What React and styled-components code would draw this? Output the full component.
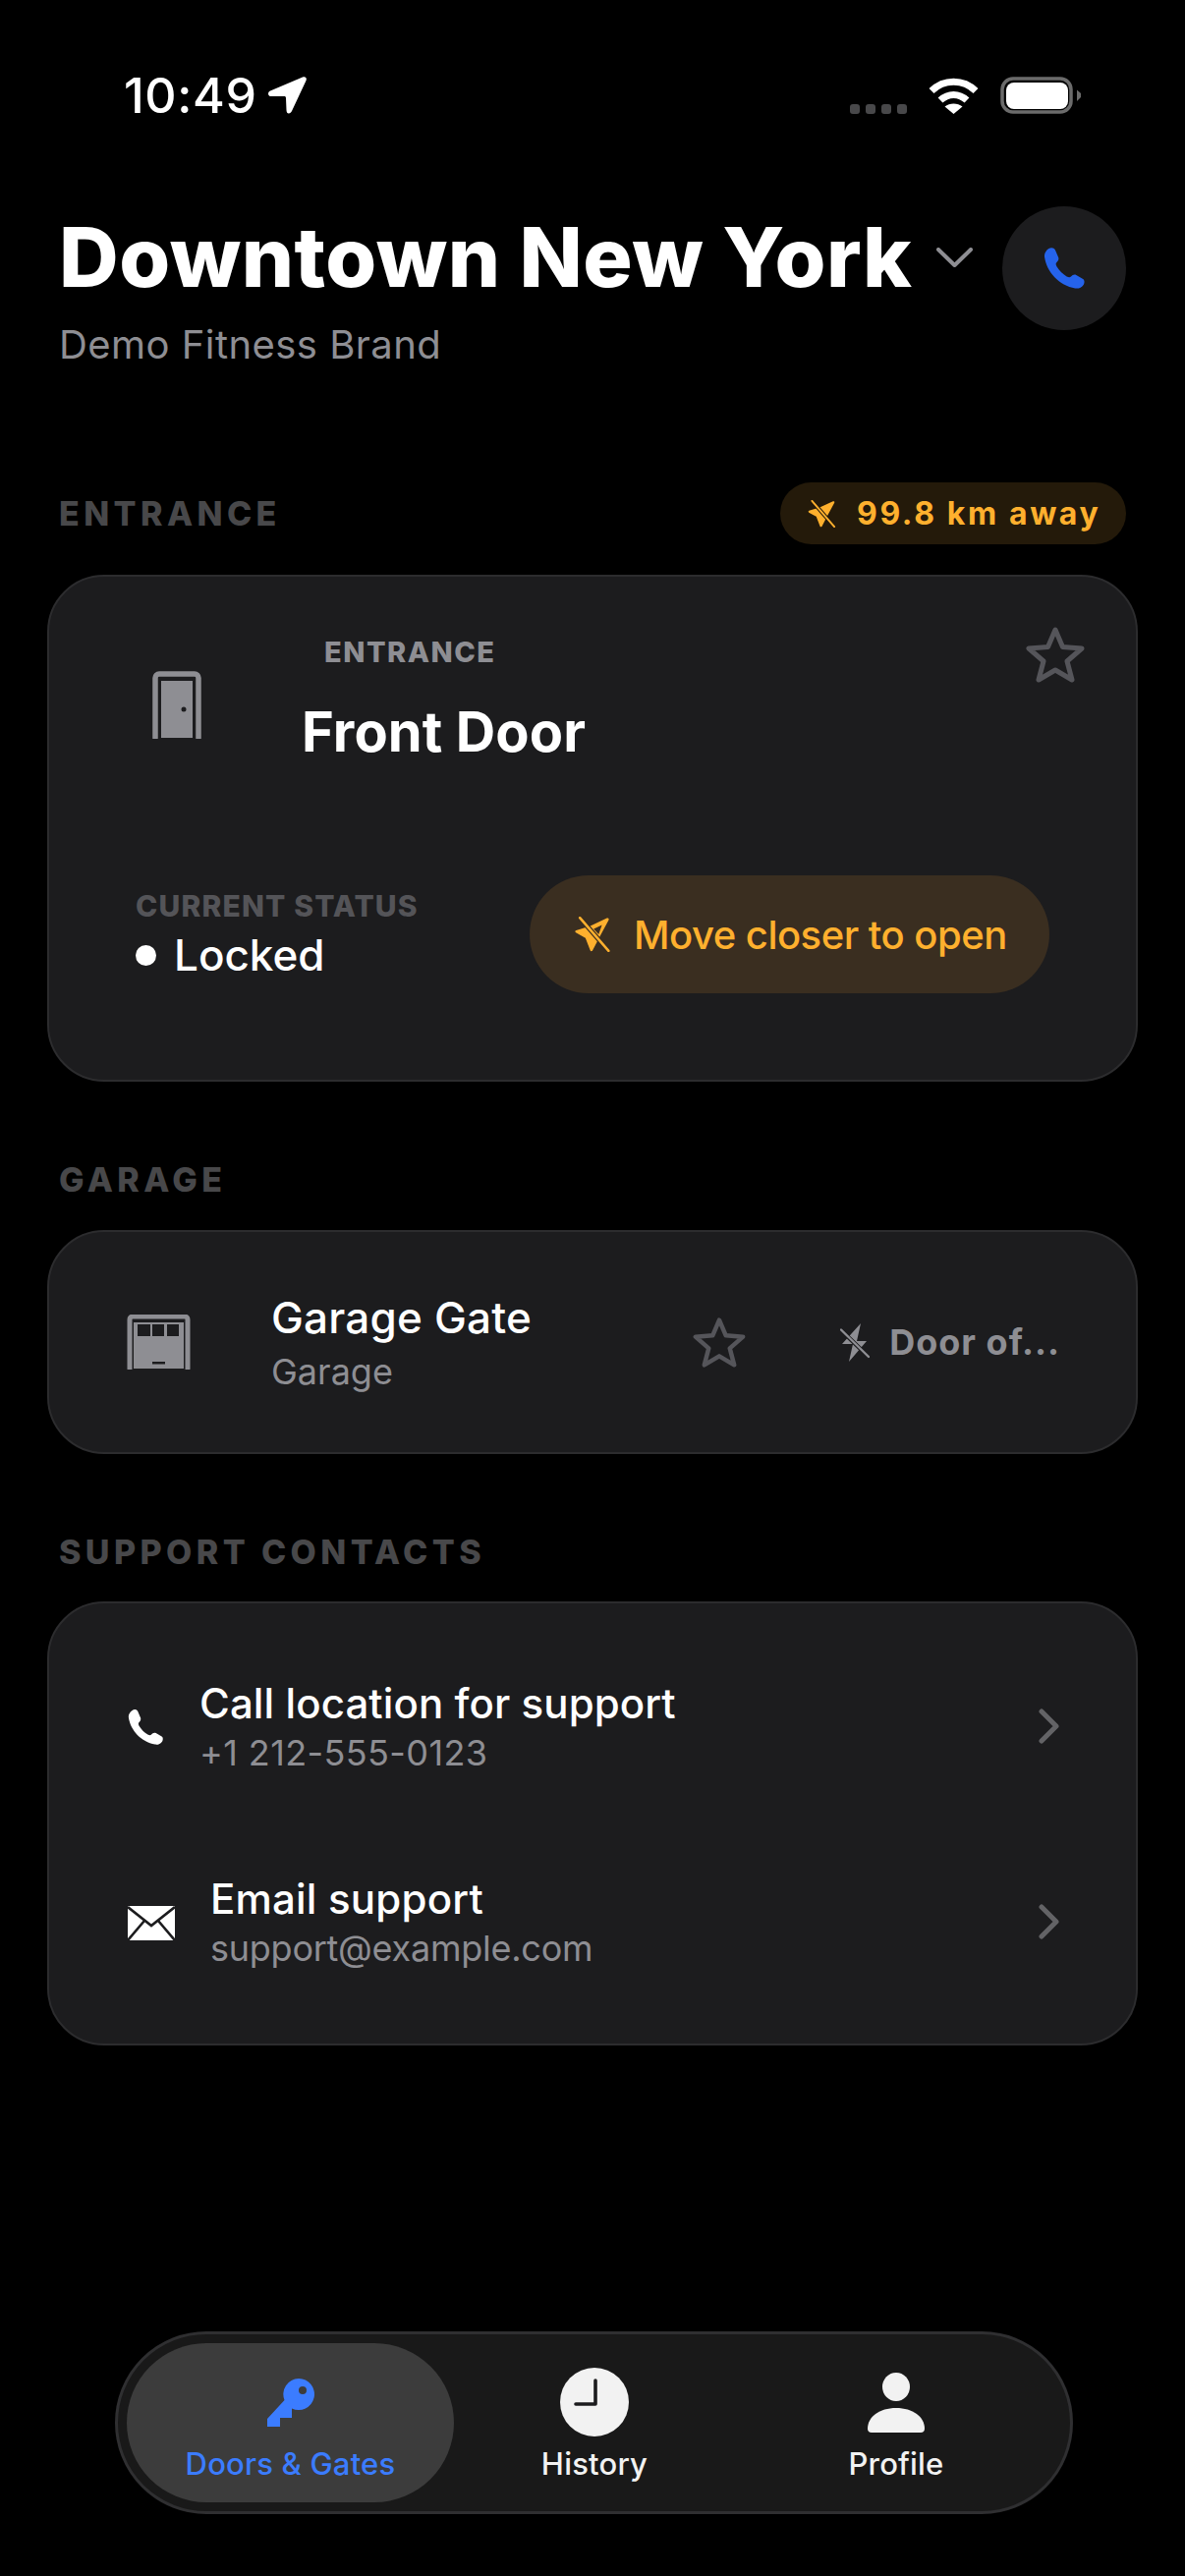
import React from "react";
import styled, { createGlobalStyle } from "styled-components";

const Global = createGlobalStyle`
  html, body { margin: 0; padding: 0; background: #000; }
  * { box-sizing: border-box; }
  body { font-family: Inter, "Noto Sans", sans-serif; }
`;

const Page = styled.div`
  width: 1206px;
  height: 2622px;
  background: #000;
  padding: 78px 48px 0;
  color: #fff;
  overflow: hidden;
`;

const StatusBar = styled.div`
  height: 38px;
  margin: 0 58px 0 78px;
  display: flex;
  align-items: center;
  justify-content: space-between;
`;
const Clock = styled.div`
  display: flex;
  align-items: center;
  gap: 11px;
  font-size: 50px;
  line-height: 38px;
  font-weight: 500;
  letter-spacing: 0.6px;
`;
const Indicators = styled.div`
  display: flex;
  align-items: center;
  gap: 22px;
`;
const Dots = styled.div`
  display: flex;
  gap: 6px;
  align-self: flex-end;
`;
const Dot = styled.span`
  width: 10px;
  height: 10px;
  border-radius: 3px;
  background: #48484a;
`;

const Header = styled.header`
  margin-top: 94px;
  padding: 0 12px;
  display: flex;
  align-items: flex-start;
  justify-content: space-between;
`;
const HeaderText = styled.div`
  padding-top: 10px;
`;
const TitleRow = styled.div`
  display: flex;
  align-items: center;
  gap: 25px;
`;
const Title = styled.h1`
  margin: 0;
  font-size: 84px;
  line-height: 84px;
  font-weight: 800;
  letter-spacing: 0.5px;
  white-space: nowrap;
`;
const Subtitle = styled.div`
  margin-top: 23px;
  font-size: 40px;
  line-height: 48px;
  letter-spacing: 0.45px;
  color: #8e8e93;
`;
const CallButton = styled.div`
  width: 126px;
  height: 126px;
  border-radius: 50%;
  background: #1c1c1e;
  display: flex;
  align-items: center;
  justify-content: center;
  flex: none;
`;

const SectionHead = styled.div`
  margin-top: ${(p) => p.$top}px;
  min-height: ${(p) => p.$height || 40}px;
  padding: 0 12px;
  display: flex;
  align-items: center;
  justify-content: space-between;
`;
const SectionLabel = styled.div`
  font-size: 34px;
  line-height: 40px;
  font-weight: 800;
  letter-spacing: 4.4px;
  color: #48484a;
`;
const DistanceBadge = styled.div`
  height: 63px;
  width: 352px;
  padding-left: 27px;
  border-radius: 32px;
  background: #241a0a;
  color: #ffb02e;
  display: flex;
  align-items: center;
  gap: 21px;
  font-size: 32px;
  font-weight: 700;
  letter-spacing: 2.6px;
  white-space: nowrap;
`;

const Card = styled.section`
  margin-top: ${(p) => p.$top || 31}px;
  background: #1c1c1e;
  border: 2px solid #2c2c2e;
  border-radius: 58px;
`;
const DoorCard = styled(Card)`
  height: 516px;
  padding: 48px 52px 0 88px;
`;
const DoorTop = styled.div`
  height: 256px;
  display: flex;
  align-items: flex-start;
`;
const DoorIconSlot = styled.div`
  margin: 48px 0 0 17px;
  flex: none;
  display: flex;
`;
const NameColumn = styled.div`
  margin-left: 102px;
  padding-top: 11px;
`;
const Kicker = styled.div`
  margin-left: 23px;
  font-size: 29px;
  line-height: 35px;
  font-weight: 800;
  letter-spacing: 1.5px;
  color: #8e8e93;
`;
const DoorName = styled.div`
  margin-top: 30px;
  font-size: 56px;
  line-height: 68px;
  font-weight: 700;
  letter-spacing: 0.1px;
`;
const StarSlot = styled.div`
  margin-left: auto;
  margin-top: 3px;
  display: flex;
`;
const DoorBottom = styled.div`
  height: 120px;
  padding-right: 36px;
  display: flex;
  align-items: center;
  justify-content: space-between;
`;
const StatusLabel = styled.div`
  font-size: 30px;
  line-height: 36px;
  font-weight: 800;
  letter-spacing: 1.15px;
  color: #545458;
`;
const StatusValue = styled.div`
  margin-top: 6px;
  display: flex;
  align-items: center;
  gap: 18px;
  font-size: 44px;
  line-height: 52px;
  font-weight: 500;
`;
const StatusDot = styled.span`
  width: 21px;
  height: 21px;
  border-radius: 50%;
  background: #fff;
`;
const MoveButton = styled.div`
  width: 529px;
  height: 120px;
  border-radius: 60px;
  padding-left: 45px;
  background: #3a2e20;
  color: #ffb02e;
  display: flex;
  align-items: center;
  gap: 24px;
  font-size: 40px;
  font-weight: 500;
  letter-spacing: -0.5px;
  white-space: nowrap;
`;

const GarageCard = styled(Card)`
  height: 228px;
  padding: 0 77px 0 79px;
  display: flex;
  align-items: center;
`;
const RowText = styled.div`
  margin-left: ${(p) => p.$gap}px;
  margin-bottom: ${(p) => p.$lift || 0}px;
`;
const RowTitle = styled.div`
  font-size: ${(p) => p.$size || 42}px;
  line-height: ${(p) => (p.$size ? 52 : 50)}px;
  font-weight: 500;
  letter-spacing: ${(p) => p.$ls || 0.1}px;
`;
const RowSub = styled.div`
  margin-top: ${(p) => p.$gap || 4}px;
  font-size: 36px;
  line-height: 42px;
  letter-spacing: ${(p) => p.$ls || 0}px;
  color: #8e8e93;
`;
const GarageStar = styled.div`
  margin-left: auto;
  display: flex;
`;
const OfflineTag = styled.div`
  margin-left: 96px;
  display: flex;
  align-items: center;
  gap: 20px;
  font-size: 36px;
  font-weight: 700;
  letter-spacing: 1px;
  color: #8e8e93;
  white-space: nowrap;
`;

const ContactCard = styled(Card)`
  height: 452px;
  padding: 27px 0 23px;
`;
const ContactRow = styled.div`
  height: 199px;
  padding: 0 78px 0 80px;
  display: flex;
  align-items: center;
`;
const RowChevron = styled.div`
  margin-left: auto;
  margin-bottom: 3px;
  display: flex;
`;

const TabBar = styled.nav`
  margin: 291px 66px 0 69px;
  height: 186px;
  padding: 9px;
  border: 3px solid #2f2f31;
  border-radius: 93px;
  background: #191919;
  display: grid;
  grid-template-columns: 333px 286px 328px;
`;
const Tab = styled.div`
  height: 162px;
  padding-top: 25px;
  border-radius: 81px;
  background: ${(p) => (p.$active ? "#3c3c3c" : "transparent")};
  color: ${(p) => (p.$active ? "#3b7cff" : "#f2f2f2")};
  display: flex;
  flex-direction: column;
  align-items: center;
`;
const TabIcon = styled.div`
  height: 70px;
  display: flex;
  align-items: center;
`;
const TabLabel = styled.div`
  margin-top: 10px;
  font-size: 31px;
  line-height: 36px;
  font-weight: 500;
  letter-spacing: 0.2px;
`;

const PHONE =
  "M5 1C7-.5 10 0 11 2l3 7c.8 2 0 3.500-1.500 5-1 1-1 2 0 4 2.500 4 5.500 7 9.500 9.500 2 1 3 1 4 0 1.500-1.500 3-2.500 5-1.500l6 3.500c2 1 2 3.500 1 5.500-2 3-5 4-8 3.500C15 36 3 23 1 9 .5 6 2 3 5 1Z";

const Phone = ({ size, color }) => (
  <svg width={size} height={size} viewBox="0 0 40 40">
    <path d={PHONE} fill={color} />
  </svg>
);

const NavSlash = ({ w, h, bg, hollow }) => (
  <svg width={w} height={h} viewBox="0 0 32 32">
    <path
      d="M30 2.500 15 9.500 2 13.500 11 18.500 15.500 30 22 17.500Z"
      fill="#ffb02e"
      stroke="#ffb02e"
      strokeWidth="2.400"
      strokeLinejoin="round"
    />
    {hollow && <path d="M25 7.500 17.500 11 22 16Z" fill={bg} />}
    <path d="M5 1 31 31" stroke={bg} strokeWidth="4.400" />
    <path d="M5 1 31 31" stroke="#ffb02e" strokeWidth="2.200" strokeLinecap="round" />
  </svg>
);

const BoltSlash = () => (
  <svg width="30" height="39" viewBox="0 0 30 39">
    <path d="M21 0 2 21h11L9 39l18-21H17Z" fill="#8e8e93" />
    <path d="M0 6 30 35" stroke="#1c1c1e" strokeWidth="4.200" />
    <path d="M1 6.500 29 34" stroke="#8e8e93" strokeWidth="2.400" strokeLinecap="round" />
  </svg>
);

const Star = ({ w, h }) => (
  <svg width={w} height={h} viewBox="0 0 60 57">
    <path
      d="M30 3 37.500 20.500 57 22 42 35 47 54 30 44 13 54 18 35 3 22 22.500 20.500Z"
      fill="none"
      stroke="#55555a"
      strokeWidth="5"
      strokeLinejoin="round"
    />
  </svg>
);

const DoorIcon = () => (
  <svg width="50" height="69" viewBox="0 0 50 69">
    <path
      d="M3 68V7a4 4 0 0 1 4-4h36a4 4 0 0 1 4 4v61"
      fill="none"
      stroke="#8e8e93"
      strokeWidth="5.500"
      strokeLinecap="round"
    />
    <rect x="9" y="10" width="32" height="58" fill="#8e8e93" />
    <circle cx="32" cy="39" r="2.500" fill="#1c1c1e" />
  </svg>
);

const GarageIcon = () => (
  <svg width="65" height="56" viewBox="0 0 65 56">
    <path
      d="M3 55V5a3 3 0 0 1 3-3h53a3 3 0 0 1 3 3v50"
      fill="none"
      stroke="#8e8e93"
      strokeWidth="5"
      strokeLinecap="round"
    />
    <rect x="7" y="8" width="51" height="47" fill="#8e8e93" />
    <rect x="11" y="10" width="13" height="12" fill="#1c1c1e" />
    <rect x="26" y="10" width="12" height="12" fill="#1c1c1e" />
    <rect x="41" y="10" width="12" height="12" fill="#1c1c1e" />
    <rect x="26" y="48" width="13" height="2.500" fill="#1c1c1e" />
  </svg>
);

const Envelope = () => (
  <svg width="48" height="35" viewBox="0 0 48 35">
    <rect width="48" height="35" fill="#fff" />
    <path
      d="M0 1 24 20 48 1M0 35 17 15M48 35 31 15"
      fill="none"
      stroke="#1c1c1e"
      strokeWidth="2.600"
    />
  </svg>
);

const Chevron = () => (
  <svg width="21" height="36" viewBox="0 0 21 36">
    <path
      d="M3 3 18 18 3 33"
      fill="none"
      stroke="#636366"
      strokeWidth="5"
      strokeLinecap="round"
      strokeLinejoin="round"
    />
  </svg>
);

const Key = () => (
  <svg width="50" height="49" viewBox="0 0 50 49">
    <path
      fillRule="evenodd"
      d="M33 0A16 16 0 1 1 26 30.400V40H14V49H1V41L18.500 22A16 16 0 0 1 33 0ZM37 8a4 4 0 1 0 0 8 4 4 0 0 0 0-8Z"
      fill="#3b7cff"
    />
  </svg>
);

const ClockIcon = () => (
  <svg width="70" height="70" viewBox="0 0 70 70">
    <circle cx="35" cy="35" r="35" fill="#f2f2f2" />
    <path
      d="M36 13V37H16"
      fill="none"
      stroke="#1c1c1e"
      strokeWidth="3.600"
      strokeLinecap="round"
      strokeLinejoin="round"
    />
  </svg>
);

const Person = () => (
  <svg width="58" height="61" viewBox="0 0 58 61">
    <ellipse cx="29" cy="14.500" rx="14" ry="14.500" fill="#f2f2f2" />
    <path
      d="M0 57C0 45 12 36 29 36s29 9 29 21c0 2.500-1.500 4-4 4H4c-2.500 0-4-1.500-4-4Z"
      fill="#f2f2f2"
    />
  </svg>
);

const LocationArrow = () => (
  <svg width="39" height="38" viewBox="0 0 39 38">
    <path
      d="M35 .6C38-.5 39.500 1.500 38.500 4L24 35c-1.500 3.500-5.500 3.500-5.500-1L18 22c0-1.500-.5-2-2-2H3c-3.500 0-4-4-1-5.500Z"
      fill="#fff"
    />
  </svg>
);

const Wifi = () => (
  <svg width="51" height="37" viewBox="0 0 51 37">
    <path d="M3 13.500C15.500 1 35.500 1 48 13.500" fill="none" stroke="#fff" strokeWidth="7" />
    <path d="M12 23C20 15.500 31 15.500 39 23" fill="none" stroke="#fff" strokeWidth="7" />
    <path d="M16.500 29.500C21.500 25.500 29.500 25.500 34.500 29.500L25.500 37Z" fill="#fff" />
  </svg>
);

const Battery = () => (
  <svg width="82" height="38" viewBox="0 0 82 38">
    <rect x="2" y="2" width="70" height="34" rx="11" fill="none" stroke="#6b6b6b" strokeWidth="3.500" />
    <rect x="6" y="6" width="63" height="27" rx="8" fill="#fff" />
    <path d="M78 13.500 82 17v4l-4 4Z" fill="#6b6b6b" />
  </svg>
);

const TitleChevron = () => (
  <svg width="37" height="20" viewBox="0 0 37 20">
    <path
      d="M2 2 18.500 18 35 2"
      fill="none"
      stroke="#8e8e93"
      strokeWidth="4"
      strokeLinecap="round"
      strokeLinejoin="round"
    />
  </svg>
);

export default function App() {
  return (
    <>
      <Global />
      <Page>
        <StatusBar>
          <Clock>
            10:49
            <LocationArrow />
          </Clock>
          <Indicators>
            <Dots>
              <Dot />
              <Dot />
              <Dot />
              <Dot />
            </Dots>
            <Wifi />
            <Battery />
          </Indicators>
        </StatusBar>

        <Header>
          <HeaderText>
            <TitleRow>
              <Title>Downtown New York</Title>
              <TitleChevron />
            </TitleRow>
            <Subtitle>Demo Fitness Brand</Subtitle>
          </HeaderText>
          <CallButton>
            <Phone size={43} color="#2563eb" />
          </CallButton>
        </Header>

        <SectionHead $top={116} $height={63}>
          <SectionLabel>ENTRANCE</SectionLabel>
          <DistanceBadge>
            <NavSlash w={30} h={28} bg="#241a0a" />
            99.8 km away
          </DistanceBadge>
        </SectionHead>
        <DoorCard>
          <DoorTop>
            <DoorIconSlot>
              <DoorIcon />
            </DoorIconSlot>
            <NameColumn>
              <Kicker>ENTRANCE</Kicker>
              <DoorName>Front Door</DoorName>
            </NameColumn>
            <StarSlot>
              <Star w={60} h={57} />
            </StarSlot>
          </DoorTop>
          <DoorBottom>
            <div>
              <StatusLabel>CURRENT STATUS</StatusLabel>
              <StatusValue>
                <StatusDot />
                Locked
              </StatusValue>
            </div>
            <MoveButton>
              <NavSlash w={37} h={36} bg="#3a2e20" hollow />
              Move closer to open
            </MoveButton>
          </DoorBottom>
        </DoorCard>

        <SectionHead $top={80}>
          <SectionLabel>GARAGE</SectionLabel>
        </SectionHead>
        <GarageCard>
          <GarageIcon />
          <RowText $gap={82}>
            <RowTitle $size={44} $ls={0.2}>Garage Gate</RowTitle>
            <RowSub $gap={8}>Garage</RowSub>
          </RowText>
          <GarageStar>
            <Star w={54} h={51} />
          </GarageStar>
          <OfflineTag>
            <BoltSlash />
            Door of...
          </OfflineTag>
        </GarageCard>

        <SectionHead $top={80}>
          <SectionLabel>SUPPORT CONTACTS</SectionLabel>
        </SectionHead>
        <ContactCard $top={30}>
          <ContactRow>
            <Phone size={37} color="#fff" />
            <RowText $gap={36} $lift={3}>
              <RowTitle>Call location for support</RowTitle>
              <RowSub $ls={0.4}>+1 212-555-0123</RowSub>
            </RowText>
            <RowChevron>
              <Chevron />
            </RowChevron>
          </ContactRow>
          <ContactRow>
            <Envelope />
            <RowText $gap={36} $lift={3}>
              <RowTitle $ls={0.2}>Email support</RowTitle>
              <RowSub $ls={-0.25}>support@example.com</RowSub>
            </RowText>
            <RowChevron>
              <Chevron />
            </RowChevron>
          </ContactRow>
        </ContactCard>

        <TabBar>
          <Tab $active>
            <TabIcon>
              <Key />
            </TabIcon>
            <TabLabel>Doors &amp; Gates</TabLabel>
          </Tab>
          <Tab>
            <TabIcon>
              <ClockIcon />
            </TabIcon>
            <TabLabel>History</TabLabel>
          </Tab>
          <Tab>
            <TabIcon>
              <Person />
            </TabIcon>
            <TabLabel>Profile</TabLabel>
          </Tab>
        </TabBar>
      </Page>
    </>
  );
}
